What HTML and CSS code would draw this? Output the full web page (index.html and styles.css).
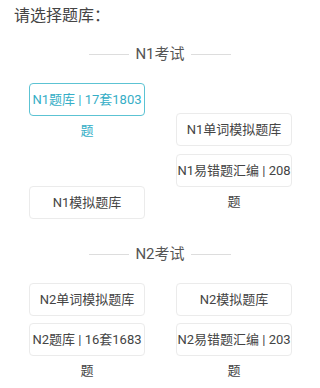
FILE: index.html
```html
<!DOCTYPE html>
<html lang="zh-CN">
<head>
<meta charset="utf-8">
<title>请选择题库</title>
<link rel="stylesheet" href="styles.css">
</head>
<body>
<h1 class="title">请选择题库：</h1>

<section class="group">
  <div class="divider"><span class="line"></span><span class="label">N1考试</span><span class="line"></span></div>
  <div class="cols">
    <div class="col">
      <div class="item active">N1题库 | 17套1803题</div>
      <div class="item after-wrap">N1模拟题库</div>
    </div>
    <div class="col col-offset">
      <div class="item">N1单词模拟题库</div>
      <div class="item">N1易错题汇编 | 208题</div>
    </div>
  </div>
</section>

<section class="group group-next">
  <div class="divider"><span class="line"></span><span class="label">N2考试</span><span class="line"></span></div>
  <div class="cols">
    <div class="col">
      <div class="item">N2单词模拟题库</div>
      <div class="item">N2题库 | 16套1683题</div>
    </div>
    <div class="col">
      <div class="item">N2模拟题库</div>
      <div class="item">N2易错题汇编 | 203题</div>
    </div>
  </div>
</section>
</body>
</html>
```

FILE: styles.css
```css
html, body {
  margin: 0;
  padding: 0;
  background: #ffffff;
}

body {
  font-family: Roboto, "Noto Sans CJK SC", "Noto Sans", sans-serif;
  color: #444444;
  width: 320px;
  height: 388px;
  overflow: hidden;
}

.title {
  margin: 0;
  padding: 4px 14px 0;
  font-size: 16px;
  line-height: 24px;
  font-weight: normal;
  color: #444444;
}

.group {
  margin-top: 16px;
}

.group-next {
  margin-top: 25px;
}

.divider {
  display: flex;
  align-items: center;
  justify-content: center;
  gap: 6px;
  height: 20px;
}

.divider .line {
  width: 40px;
  height: 1px;
  background: #dddddd;
}

.divider .label {
  font-size: 15px;
  line-height: 20px;
  color: #555555;
}

.cols {
  display: flex;
  gap: 31px;
  padding-left: 29px;
  margin-top: 19px;
}

.col {
  display: flex;
  flex-direction: column;
  gap: 7px;
  width: 116px;
}

.col-offset {
  padding-top: 30px;
  gap: 8px;
}

.item {
  box-sizing: border-box;
  width: 116px;
  height: 33px;
  line-height: 31px;
  border: 1px solid #ebebeb;
  border-radius: 4px;
  text-align: center;
  font-size: 13px;
  color: #444444;
  overflow: visible;
}

.item.active {
  border-color: #5cc3d3;
  color: #35aec6;
}

.item.after-wrap {
  margin-top: 63px;
}
```
